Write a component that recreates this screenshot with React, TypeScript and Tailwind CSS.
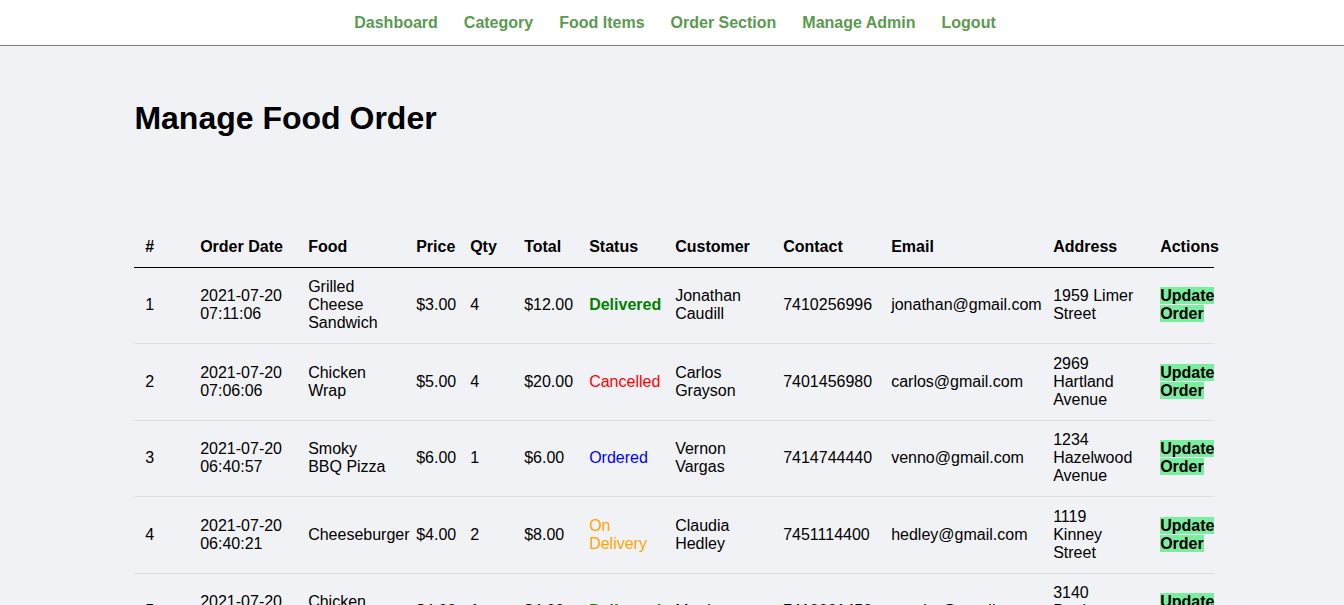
const navLinks = ['Dashboard', 'Category', 'Food Items', 'Order Section', 'Manage Admin', 'Logout']

type Order = {
  date: string
  food: string
  price: string
  qty: number
  total: string
  status: 'Delivered' | 'Cancelled' | 'Ordered' | 'On Delivery'
  customer: string
  contact: string
  email: string
  address: string
}

const orders: Order[] = [
  { date: '2021-07-20 07:11:06', food: 'Grilled Cheese Sandwich', price: '$3.00', qty: 4, total: '$12.00', status: 'Delivered', customer: 'Jonathan Caudill', contact: '7410256996', email: 'jonathan@gmail.com', address: '1959 Limer Street' },
  { date: '2021-07-20 07:06:06', food: 'Chicken Wrap', price: '$5.00', qty: 4, total: '$20.00', status: 'Cancelled', customer: 'Carlos Grayson', contact: '7401456980', email: 'carlos@gmail.com', address: '2969 Hartland Avenue' },
  { date: '2021-07-20 06:40:57', food: 'Smoky BBQ Pizza', price: '$6.00', qty: 1, total: '$6.00', status: 'Ordered', customer: 'Vernon Vargas', contact: '7414744440', email: 'venno@gmail.com', address: '1234 Hazelwood Avenue' },
  { date: '2021-07-20 06:40:21', food: 'Cheeseburger', price: '$4.00', qty: 2, total: '$8.00', status: 'On Delivery', customer: 'Claudia Hedley', contact: '7451114400', email: 'hedley@gmail.com', address: '1119 Kinney Street' },
  { date: '2021-07-20 06:10:37', food: 'Chicken Burger', price: '$4.00', qty: 1, total: '$4.00', status: 'Delivered', customer: 'Martha', contact: '7410001450', email: 'martha@gmail.com', address: '3140 Bartlett Avenue' },
]

function Status({ status }: { status: Order['status'] }) {
  if (status === 'Delivered') return <span className="font-bold text-[#008000]">Delivered</span>
  if (status === 'Cancelled') return <span className="text-[#ff0000]">Cancelled</span>
  if (status === 'Ordered') return <span className="text-[#0000ff]">Ordered</span>
  return <span className="text-[#ffa500]">On Delivery</span>
}

const headers = ['#', 'Order Date', 'Food', 'Price', 'Qty', 'Total', 'Status', 'Customer', 'Contact', 'Email', 'Address', 'Actions']
const widths = ['w-[55px]', 'w-[108px]', 'w-[108px]', 'w-[54px]', 'w-[54px]', 'w-[65px]', 'w-[86px]', 'w-[108px]', 'w-[108px]', 'w-[162px]', 'w-[107px]', 'w-[65px]']

export default function App() {
  return (
    <div className="min-h-screen bg-[#f1f2f6] text-black text-base leading-[normal]" style={{ fontFamily: '"Liberation Sans", Arial, sans-serif' }}>
      <div className="h-[46px] bg-white border-b border-[#808080] flex items-center justify-center gap-[26px] pl-[6px]">
        {navLinks.map((l) => (
          <a key={l} href="#" className="font-bold text-[#5a9a50]">
            {l}
          </a>
        ))}
      </div>

      <div className="w-[80%] mx-auto pt-[54px]">
        <h1 className="text-[32px] font-bold leading-[normal]">Manage Food Order</h1>

        <table className="table-fixed w-[1080px] mt-[90px] text-left">
          <colgroup>
            {widths.map((w, i) => (
              <col key={i} className={w} />
            ))}
          </colgroup>
          <thead>
            <tr>
              {headers.map((h) => (
                <th key={h} className="px-[10.75px] py-[10.75px] font-bold border-b border-black whitespace-nowrap">
                  {h}
                </th>
              ))}
            </tr>
          </thead>
          <tbody>
            {orders.map((o, i) => (
              <tr key={i} className="border-b border-[#dcdde1]">
                <td className="p-[10.75px]">{i + 1}</td>
                <td className="p-[10.75px]">{o.date}</td>
                <td className="p-[10.75px]">{o.food}</td>
                <td className="p-[10.75px]">{o.price}</td>
                <td className="p-[10.75px]">{o.qty}</td>
                <td className="p-[10.75px]">{o.total}</td>
                <td className="p-[10.75px]">
                  <Status status={o.status} />
                </td>
                <td className="p-[10.75px]">{o.customer}</td>
                <td className="p-[10.75px]">{o.contact}</td>
                <td className="p-[10.75px]">{o.email}</td>
                <td className="p-[10.75px]">{o.address}</td>
                <td className="py-[10.75px] pl-[10.75px] pr-0">
                  <a href="#" className="font-bold bg-[#7bed9f] text-black">
                    Update Order
                  </a>
                </td>
              </tr>
            ))}
          </tbody>
        </table>
      </div>
    </div>
  )
}
